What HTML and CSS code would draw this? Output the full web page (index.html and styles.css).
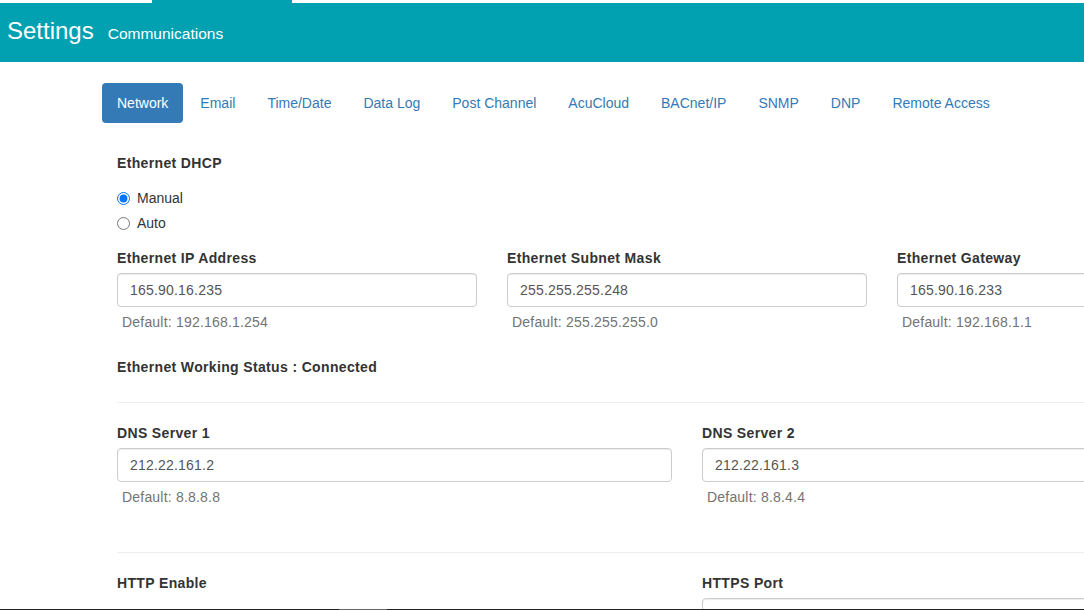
FILE: index.html
```html
<!DOCTYPE html>
<html lang="en">
<head>
<meta charset="utf-8">
<title>Settings - Communications</title>
<link rel="stylesheet" href="styles.css">
</head>
<body>
<div class="topstrip"><span class="topstrip-tab"></span></div>
<header class="header">
  <h1 class="title">Settings</h1>
  <span class="subtitle">Communications</span>
</header>
<main class="content">
  <ul class="nav">
    <li class="nav-item active"><a href="#">Network</a></li>
    <li class="nav-item"><a href="#">Email</a></li>
    <li class="nav-item"><a href="#">Time/Date</a></li>
    <li class="nav-item"><a href="#">Data Log</a></li>
    <li class="nav-item"><a href="#">Post Channel</a></li>
    <li class="nav-item"><a href="#">AcuCloud</a></li>
    <li class="nav-item"><a href="#">BACnet/IP</a></li>
    <li class="nav-item"><a href="#">SNMP</a></li>
    <li class="nav-item"><a href="#">DNP</a></li>
    <li class="nav-item"><a href="#">Remote Access</a></li>
  </ul>
  <form class="form">
    <div class="field-title">Ethernet DHCP</div>
    <div class="radios">
      <label class="radio"><input type="radio" name="dhcp" checked> Manual</label>
      <label class="radio"><input type="radio" name="dhcp"> Auto</label>
    </div>
    <div class="grid grid-3">
      <div class="field">
        <label class="field-label">Ethernet IP Address</label>
        <input class="input" type="text" value="165.90.16.235">
        <div class="help">Default: 192.168.1.254</div>
      </div>
      <div class="field">
        <label class="field-label">Ethernet Subnet Mask</label>
        <input class="input" type="text" value="255.255.255.248">
        <div class="help">Default: 255.255.255.0</div>
      </div>
      <div class="field">
        <label class="field-label">Ethernet Gateway</label>
        <input class="input" type="text" value="165.90.16.233">
        <div class="help">Default: 192.168.1.1</div>
      </div>
    </div>
    <div class="status">Ethernet Working Status : Connected</div>
    <hr class="divider">
    <div class="grid grid-2">
      <div class="field">
        <label class="field-label">DNS Server 1</label>
        <input class="input" type="text" value="212.22.161.2">
        <div class="help">Default: 8.8.8.8</div>
      </div>
      <div class="field">
        <label class="field-label">DNS Server 2</label>
        <input class="input" type="text" value="212.22.161.3">
        <div class="help">Default: 8.8.4.4</div>
      </div>
    </div>
    <hr class="divider">
    <div class="grid grid-2">
      <div class="field">
        <label class="field-label">HTTP Enable</label>
      </div>
      <div class="field">
        <label class="field-label">HTTPS Port</label>
        <input class="input" type="text" value="">
      </div>
    </div>
  </form>
</main>
<div class="screen-edge"><span class="screen-edge-thumb"></span></div>
</body>
</html>
```
FILE: styles.css
```css
html, body {
  margin: 0;
  padding: 0;
  overflow: hidden;
  background: #fff;
}
body {
  font-family: "Liberation Sans", Arial, sans-serif;
  font-size: 14px;
  line-height: 20px;
  color: #333;
  width: 1084px;
  height: 610px;
}
.topstrip {
  height: 3px;
  display: flex;
}
.topstrip-tab {
  display: block;
  margin-left: 152px;
  width: 140px;
  height: 3px;
  background: #01a1b1;
}
.header {
  height: 59px;
  box-sizing: border-box;
  background: #01a1b1;
  display: flex;
  align-items: baseline;
  padding: 16px 0 0 7px;
  color: #fff;
}
.title {
  margin: 0;
  font-size: 24px;
  line-height: 24px;
  font-weight: normal;
}
.subtitle {
  margin-left: 14px;
  font-size: 15.5px;
}
.content {
  margin-left: 102px;
  width: 1170px;
}
.nav {
  list-style: none;
  margin: 21px 0 0 0;
  padding: 0;
  display: flex;
  gap: 2px;
}
.nav-item a {
  display: block;
  padding: 10px 15px;
  border-radius: 4px;
  color: #337ab7;
  text-decoration: none;
}
.nav-item.active a {
  background: #337ab7;
  color: #fff;
}
.form {
  padding: 0 15px;
  margin-top: 30px;
  display: flex;
  flex-direction: column;
}
.field-title,
.field-label,
.status {
  display: block;
  font-weight: bold;
  letter-spacing: 0.35px;
}
.radios {
  margin: 15px 0;
  display: flex;
  flex-direction: column;
  gap: 5px;
}
.radio {
  display: block;
  position: relative;
  padding-left: 20px;
  line-height: 20px;
}
.radio input {
  position: absolute;
  left: 0;
  top: 4px;
  margin: 0;
  width: 13px;
  height: 13px;
}
.grid {
  display: grid;
  column-gap: 30px;
  margin-bottom: 15px;
}
.grid-3 {
  grid-template-columns: repeat(3, 1fr);
}
.grid-2 {
  grid-template-columns: repeat(2, 1fr);
}
.field-label {
  margin-bottom: 5px;
}
.input {
  display: block;
  box-sizing: border-box;
  width: 100%;
  height: 34px;
  padding: 6px 12px;
  font-family: inherit;
  font-size: 14px;
  line-height: 20px;
  letter-spacing: 0.2px;
  color: #555;
  background: #fff;
  border: 1px solid #ccc;
  border-radius: 4px;
  box-shadow: inset 0 1px 1px rgba(0, 0, 0, 0.075);
}
.help {
  margin: 5px 0 10px;
  padding-left: 5px;
  letter-spacing: 0.2px;
  color: #737373;
}
.status {
  margin-bottom: 5px;
}
.divider {
  width: 100%;
  margin: 20px 0;
  border: 0;
  border-top: 1px solid #eee;
}
.screen-edge {
  position: fixed;
  left: 0;
  right: 0;
  bottom: 0;
  height: 1px;
  background: #222;
}
.screen-edge-thumb {
  display: block;
  margin-left: 339px;
  width: 48px;
  height: 1px;
  background: #666;
}
```
